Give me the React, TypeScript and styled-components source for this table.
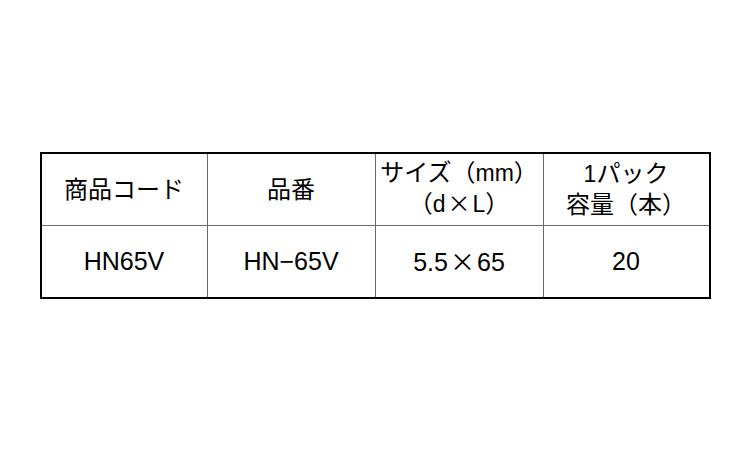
import React from "react";
import styled, { createGlobalStyle } from "styled-components";

const GlobalStyle = createGlobalStyle`
  html, body {
    margin: 0;
    padding: 0;
    background: #ffffff;
  }
`;

const Page = styled.div`
  width: 750px;
  height: 450px;
  display: flex;
  align-items: center;
  justify-content: center;
  font-family: "Liberation Sans", "Noto Sans CJK JP", sans-serif;
  color: #000;
`;

const Table = styled.div`
  display: grid;
  grid-template-columns: 166px 168px 168px 165px;
  grid-template-rows: 72px 71px;
  border: 2px solid #000;
`;

const Cell = styled.div<{ $last?: boolean; $head?: boolean }>`
  display: flex;
  flex-direction: column;
  align-items: center;
  justify-content: center;
  border-right: ${({ $last }) => ($last ? "none" : "1px solid #6a6a6a")};
  border-bottom: ${({ $head }) => ($head ? "1px solid #6a6a6a" : "none")};
  font-size: ${({ $head }) => ($head ? "23px" : "25px")};
  line-height: ${({ $head }) => ($head ? "29px" : "30px")};
  padding-bottom: ${({ $head }) => ($head ? "3px" : "0")};
  white-space: nowrap;
`;

const Jp = styled.span`
  font-family: "Noto Sans CJK JP", sans-serif;
  font-size: 24px;
  line-height: 28px;
`;

const Times = styled.span`
  font-family: "Noto Sans CJK JP", sans-serif;
  margin: 0 2px;
`;

const headers: React.ReactNode[][] = [
  [<Jp key="a">商品コード</Jp>],
  [<Jp key="a">品番</Jp>],
  [
    <span key="a">
      <Jp>サイズ（</Jp>mm<Jp>）</Jp>
    </span>,
    <span key="b">
      <Jp>（</Jp>d<Times>×</Times>L<Jp>）</Jp>
    </span>,
  ],
  [
    <span key="a">
      1<Jp>パック</Jp>
    </span>,
    <Jp key="b">容量（本）</Jp>,
  ],
];

const values: React.ReactNode[] = [
  "HN65V",
  "HN−65V",
  <span key="s">
    5.5<Times>×</Times>65
  </span>,
  "20",
];

export default function App() {
  return (
    <>
      <GlobalStyle />
      <Page>
        <Table>
          {headers.map((lines, i) => (
            <Cell key={`h${i}`} $head $last={i === headers.length - 1}>
              {lines}
            </Cell>
          ))}
          {values.map((v, i) => (
            <Cell key={`v${i}`} $last={i === values.length - 1}>
              {v}
            </Cell>
          ))}
        </Table>
      </Page>
    </>
  );
}
